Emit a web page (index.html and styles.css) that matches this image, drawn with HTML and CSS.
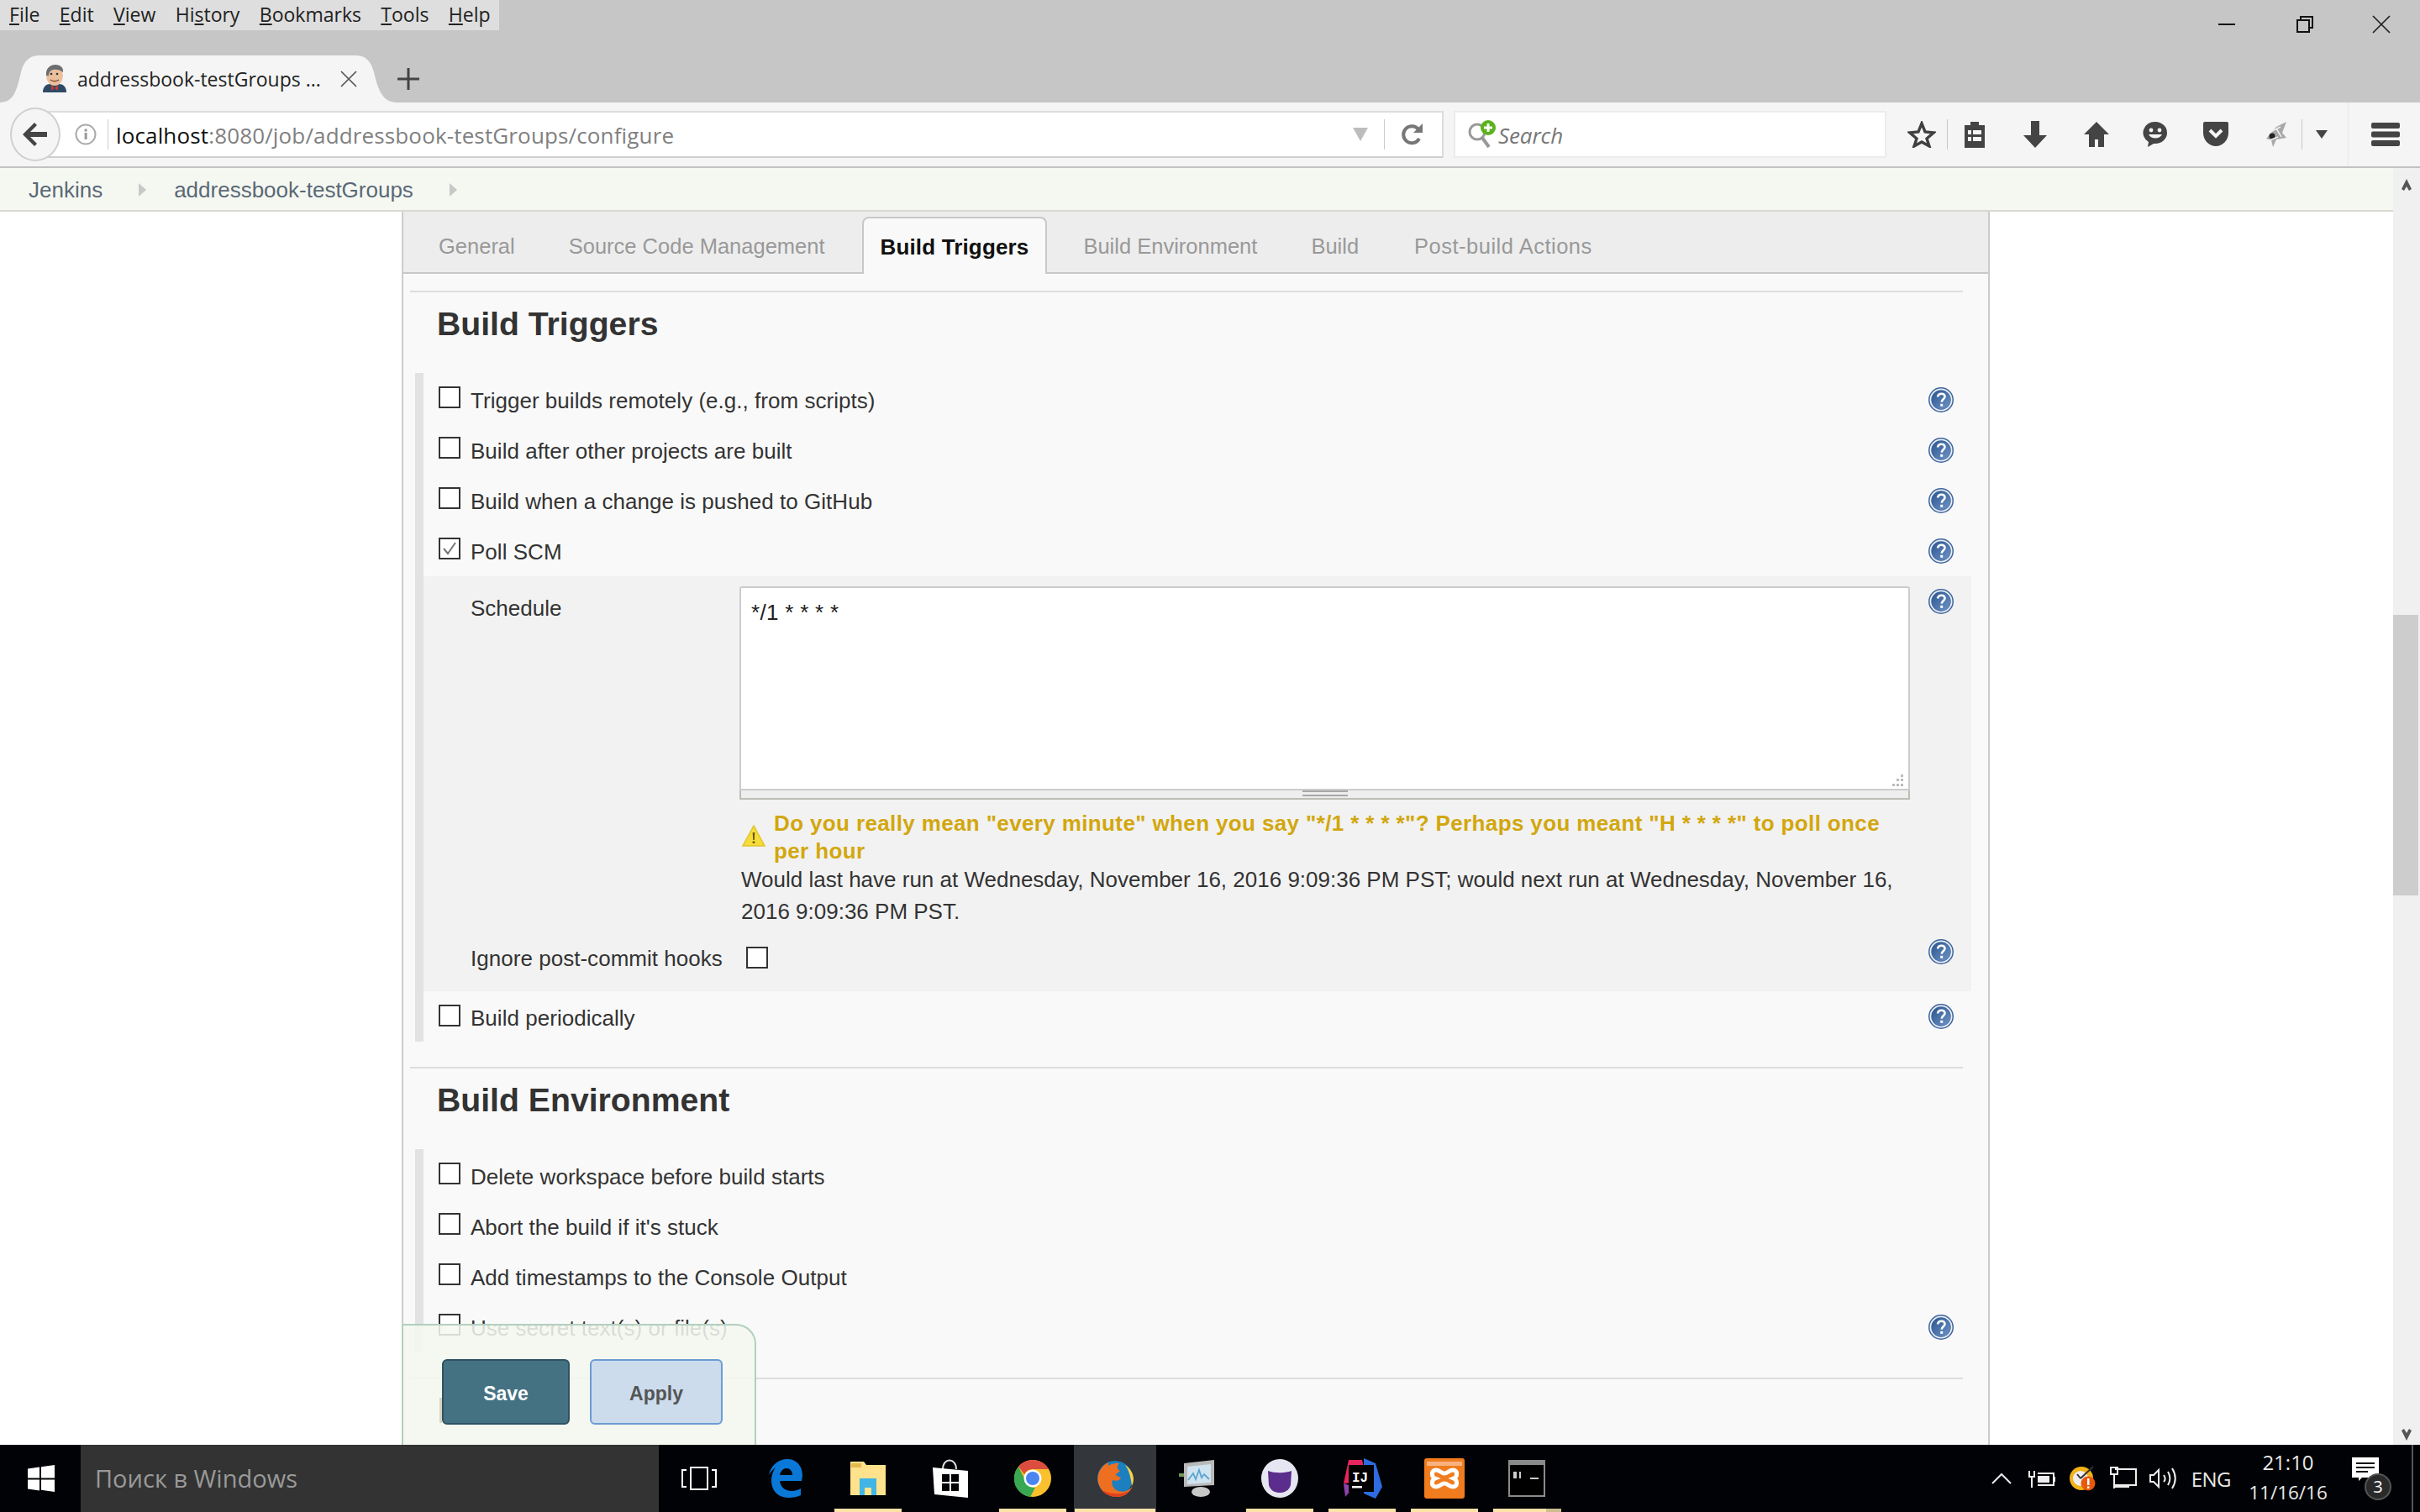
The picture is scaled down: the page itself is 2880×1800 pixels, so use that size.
FILE: index.html
```html
<!DOCTYPE html>
<html lang="en">
<head>
<meta charset="utf-8">
<title>addressbook-testGroups Config</title>
<link rel="stylesheet" href="styles.css">
</head>
<body>
<svg class="sprite" width="0" height="0" aria-hidden="true">
  <defs>
    <linearGradient id="helpfill" x1="0" y1="0" x2="1" y2="1"><stop offset="0" stop-color="#2b558f"/><stop offset="1" stop-color="#6f95c8"/></linearGradient>
    <symbol id="help" viewBox="0 0 32 32">
      <circle cx="16" cy="16" r="15" fill="#3f659c"/>
      <circle cx="16" cy="16" r="12.6" fill="none" stroke="#e8eef6" stroke-width="1.8"/>
      <circle cx="16" cy="16" r="11" fill="url(#helpfill)"/>
      <path d="M12 12.5c.4-2.6 2.2-3.8 4.3-3.8 2.4 0 4.2 1.4 4.2 3.5 0 3-3.6 3.2-3.8 6.4" fill="none" stroke="#fff" stroke-width="2.6"/>
      <rect x="15.2" y="20.8" width="3" height="3" fill="#fff"/>
    </symbol>
  </defs>
</svg>
<div class="screen">
  <header class="chrome-top">
    <nav class="menubar">
      <span class="menu"><u>F</u>ile</span><span class="menu"><u>E</u>dit</span><span class="menu"><u>V</u>iew</span><span class="menu">Hi<u>s</u>tory</span><span class="menu"><u>B</u>ookmarks</span><span class="menu"><u>T</u>ools</span><span class="menu"><u>H</u>elp</span>
    </nav>
    <div class="winctl">
      <svg class="wc-min" width="20" height="4" viewBox="0 0 20 4"><rect width="20" height="2" y="1" fill="#111"/></svg>
      <svg class="wc-res" width="20" height="20" viewBox="0 0 20 20"><path d="M5 4V1h14v13h-4M1 5h14v14H1z" fill="none" stroke="#111" stroke-width="2"/></svg>
      <svg class="wc-close" width="22" height="22" viewBox="0 0 22 22"><path d="M1 1l20 20M21 1L1 21" stroke="#222" stroke-width="1.7"/></svg>
    </div>
    <div class="tabstrip">
      <div class="tab">
        <svg class="tab-shape" width="472" height="56" viewBox="0 0 472 56"><path d="M0 56C16 56 20 42 25 20 29 5 36 0 48 0H422C434 0 441 5 445 20 450 42 456 56 472 56Z" fill="#f5f5f5"/></svg>
        <svg class="favicon" width="30" height="34" viewBox="0 0 30 34">
          <path d="M1 33c0-7 4-10 9-10h10c5 0 9 3 9 10z" fill="#2f4a66"/>
          <path d="M11 24l4 4 4-4v7l-4-3-4 3z" fill="#c23a34"/>
          <ellipse cx="15" cy="13" rx="10" ry="12" fill="#e9bf9c"/>
          <path d="M5 13C4 4 10 0 16 0s10 4 9 9c-3-3-8-4-12-3-3 1-5 3-5 7z" fill="#6b6e70"/>
          <circle cx="11" cy="11" r="1.3" fill="#333"/><circle cx="18" cy="11" r="1.3" fill="#333"/>
          <path d="M10 18c3 2 7 2 10 0" stroke="#7a4a32" stroke-width="1.4" fill="none"/>
        </svg>
        <span class="tab-title">addressbook-testGroups ...</span>
        <svg class="tab-close" width="22" height="22" viewBox="0 0 22 22"><path d="M2 2l18 18M20 2L2 20" stroke="#555" stroke-width="1.7"/></svg>
      </div>
      <svg class="newtab" width="26" height="26" viewBox="0 0 26 26"><path d="M13 0v26M0 13h26" stroke="#444" stroke-width="3"/></svg>
    </div>
  </header>

  <div class="navbar">
    <div class="backbtn"><svg width="32" height="30" viewBox="0 0 32 30"><path d="M15 1L1 15l14 14 3-3-8-8h20v-6H10l8-8z" fill="#444"/></svg></div>
    <div class="urlbar">
      <svg class="info" width="26" height="26" viewBox="0 0 26 26"><circle cx="13" cy="13" r="11.5" fill="none" stroke="#aaa" stroke-width="2"/><rect x="11.6" y="11" width="3" height="8" fill="#999"/><rect x="11.6" y="6.5" width="3" height="3" fill="#999"/></svg>
      <span class="urlsep"></span>
      <span class="url"><span class="url-host">localhost</span>:8080/job/addressbook-testGroups/configure</span>
      <svg class="url-drop" width="18" height="16" viewBox="0 0 18 16"><path d="M0 0h18L9 16z" fill="#bdbdbd"/></svg>
      <span class="urlsep urlsep-r"></span>
      <svg class="reload" width="26" height="30" viewBox="0 0 26 30"><path d="M20 9a10 10 0 1 0 1 11" fill="none" stroke="#777" stroke-width="4"/><path d="M25 2v11H14z" fill="#777"/></svg>
    </div>
    <div class="searchbar">
      <svg class="searchicon" width="36" height="34" viewBox="0 0 36 34"><circle cx="12" cy="14" r="9" fill="none" stroke="#999" stroke-width="3"/><path d="M18 21l8 11" stroke="#999" stroke-width="4"/><circle cx="25" cy="9" r="9" fill="#5ab31a"/><path d="M25 4v10M20 9h10" stroke="#fff" stroke-width="3"/></svg>
      <span class="search-ph">Search</span>
    </div>
    <div class="tools">
      <svg class="t-star" width="34" height="32" viewBox="0 0 34 32"><path d="M17 3l4 10 10 1-8 7 3 9-9-5-9 5 3-9-8-7 10-1z" fill="none" stroke="#404040" stroke-width="3.4"/></svg>
      <span class="toolsep"></span>
      <svg class="t-clip" width="30" height="34" viewBox="0 0 30 34"><path d="M3 6h7V2h10v4h7v27H3z" fill="#444"/><path d="M7 12h16v5H7zM7 20h16v5H7z" fill="#f5f5f5"/><path d="M12 10v17" stroke="#444" stroke-width="2"/></svg>
      <svg class="t-dl" width="30" height="32" viewBox="0 0 30 32"><path d="M10 0h10v17h9L15 32 1 17h9z" fill="#444"/></svg>
      <svg class="t-home" width="32" height="32" viewBox="0 0 32 32"><path d="M16 1L1 16h6v15h7v-9h4v9h7V16h6z" fill="#444"/></svg>
      <svg class="t-hello" width="30" height="32" viewBox="0 0 30 32"><path d="M15 1a14 13 0 0 0-8 24l-1 6 7-4h2a14 13 0 0 0 0-26z" fill="#444"/><circle cx="10" cy="11" r="2.4" fill="#f5f5f5"/><circle cx="20" cy="11" r="2.4" fill="#f5f5f5"/><path d="M7 16c3 6 13 6 16 0z" fill="#f5f5f5"/></svg>
      <svg class="t-pocket" width="32" height="32" viewBox="0 0 32 32"><path d="M3 1h26a2 2 0 0 1 2 2v11a15 16 0 0 1-30 0V3a2 2 0 0 1 2-2z" fill="#444"/><path d="M9 11l7 7 7-7" fill="none" stroke="#f5f5f5" stroke-width="4"/></svg>
      <svg class="t-fly" width="32" height="34" viewBox="0 0 32 34"><path d="M4 22L16 8l12-6-5 13 5 6-12 2-4 9-2-8z" fill="#a8a8a8"/><circle cx="11" cy="19" r="3.5" fill="#222"/><path d="M16 10l6 10M9 14l12-6M8 24l10-4" stroke="#eee" stroke-width="1.5"/></svg>
      <span class="toolsep toolsep-b"></span>
      <svg class="t-more" width="14" height="10" viewBox="0 0 14 10"><path d="M0 0h14L7 10z" fill="#444"/></svg>
      <span class="toolsep toolsep-c"></span>
      <svg class="t-menu" width="34" height="28" viewBox="0 0 34 28"><path d="M2 0h30a2 2 0 0 1 2 2v3a2 2 0 0 1-2 2H2a2 2 0 0 1-2-2V2a2 2 0 0 1 2-2zM2 10.500h30a2 2 0 0 1 2 2v3a2 2 0 0 1-2 2H2a2 2 0 0 1-2-2v-3a2 2 0 0 1 2-2zM2 21h30a2 2 0 0 1 2 2v3a2 2 0 0 1-2 2H2a2 2 0 0 1-2-2v-3a2 2 0 0 1 2-2z" fill="#444"/></svg>
    </div>
  </div>

  <div class="body-row">
    <div class="viewport">
      <div class="crumbs">
        <a class="crumb">Jenkins</a><i class="crumb-arrow"></i>
        <a class="crumb">addressbook-testGroups</a><i class="crumb-arrow"></i>
      </div>
      <div class="doc">
        <form class="cfg">
          <div class="cfg-tabs">
            <span class="cfg-tab">General</span>
            <span class="cfg-tab">Source Code Management</span>
            <span class="cfg-tab is-active">Build Triggers</span>
            <span class="cfg-tab">Build Environment</span>
            <span class="cfg-tab">Build</span>
            <span class="cfg-tab cfg-tab-last">Post-build Actions</span>
          </div>
          <div class="cfg-body">
            <hr class="rule rule-first">
            <h2 class="sect-title">Build Triggers</h2>
            <div class="sect">
              <div class="row"><span class="cb"></span><span class="lbl">Trigger builds remotely (e.g., from scripts)</span><svg class="help"><use href="#help"/></svg></div>
              <div class="row"><span class="cb"></span><span class="lbl">Build after other projects are built</span><svg class="help"><use href="#help"/></svg></div>
              <div class="row"><span class="cb"></span><span class="lbl">Build when a change is pushed to GitHub</span><svg class="help"><use href="#help"/></svg></div>
              <div class="row"><span class="cb"><svg width="22" height="22" viewBox="0 0 22 22"><path d="M4 11l5 6 9-13" fill="none" stroke="#777" stroke-width="2"/></svg></span><span class="lbl">Poll SCM</span><svg class="help"><use href="#help"/></svg></div>
              <div class="nested">
                <div class="sched">
                  <span class="sched-lbl">Schedule</span>
                  <div class="sched-val">
                    <div class="ta">
                      <span class="ta-text">*/1 * * * *</span>
                      <svg class="grip" width="16" height="16" viewBox="0 0 16 16"><path d="M11 1h3v3h-3zM6 6h3v3H6zM11 6h3v3h-3zM1 12h3v3H1zM6 12h3v3H6zM11 12h3v3h-3z" fill="#bbb"/></svg>
                    </div>
                    <div class="ta-handle"><span class="ta-handle-grip"></span></div>
                    <div class="warn">
                      <svg class="warn-ic" width="28" height="26" viewBox="0 0 28 26"><path d="M14 1L1 25h26z" fill="#f5dc3a" stroke="#e0c52a" stroke-width="1.5"/><path d="M12.700 9h2.600l-.5 9h-1.600zM12.700 19.500h2.600v2.500h-2.600z" fill="#6b5a10"/></svg>
                      <span class="warn-text">Do you really mean "every minute" when you say "*/1 * * * *"? Perhaps you meant "H * * * *" to poll once per hour</span>
                    </div>
                    <p class="sched-info">Would last have run at Wednesday, November 16, 2016 9:09:36 PM PST; would next run at Wednesday, November 16, 2016 9:09:36 PM PST.</p>
                  </div>
                  <svg class="help help-sched"><use href="#help"/></svg>
                </div>
                <div class="ignore">
                  <span class="lbl ignore-lbl">Ignore post-commit hooks</span><span class="cb cb-plain"></span><svg class="help help-ign"><use href="#help"/></svg>
                </div>
              </div>
              <div class="row row-down"><span class="cb"></span><span class="lbl">Build periodically</span><svg class="help help-up"><use href="#help"/></svg></div>
            </div>
            <hr class="rule">
            <h2 class="sect-title">Build Environment</h2>
            <div class="sect">
              <div class="row"><span class="cb"></span><span class="lbl">Delete workspace before build starts</span></div>
              <div class="row"><span class="cb"></span><span class="lbl">Abort the build if it's stuck</span></div>
              <div class="row"><span class="cb"></span><span class="lbl">Add timestamps to the Console Output</span></div>
              <div class="row"><span class="cb"></span><span class="lbl">Use secret text(s) or file(s)</span><svg class="help"><use href="#help"/></svg></div>
            </div>
            <hr class="rule">
          </div>
        </form>
        <div class="savebar">
          <button type="button" class="btn btn-save">Save</button>
          <button type="button" class="btn btn-apply">Apply</button>
        </div>
      </div>
    </div>
    <div class="scrollbar">
      <svg class="sb-arrow" width="14" height="16" viewBox="0 0 14 16"><path d="M7 1L1 13l3 2 3-5 3 5 3-2z" fill="#555"/></svg>
      <span class="sb-thumb"></span>
      <svg class="sb-arrow sb-down" width="14" height="16" viewBox="0 0 14 16"><path d="M7 15l6-12-3-2-3 5-3-5-3 2z" fill="#555"/></svg>
    </div>
  </div>

  <footer class="taskbar">
    <div class="start"><svg width="32" height="32" viewBox="0 0 32 32"><path d="M0 4.500L14 2.500v13H0zM16 2.200L32 0v15.500H16zM0 17.500h14v13l-14-2zM16 17.500h16V32l-16-2.200z" fill="#fff"/></svg></div>
    <div class="tb-search">Поиск в Windows</div>
    <div class="slot slot-tv"><svg width="42" height="28" viewBox="0 0 42 28"><path d="M11 1h20v26H11zM6 4H1v20h5M36 4h5v20h-5" fill="none" stroke="#fff" stroke-width="2"/></svg></div>
    <div class="slot"><svg width="40" height="46" viewBox="0 0 40 46"><path d="M39 26H13c1 8 7 12 14 12 4 0 8-1 11-3v8c-4 2-9 3-14 3C11 46 3 38 3 25 3 20 5 14 8 10c-3 2-6 5-8 9C2 8 11 0 22 0c11 0 18 8 18 20z" fill="#0a78d7"/><path d="M13 19h15c0-5-3-8-7-8s-7 3-8 8z" fill="#010205"/></svg></div>
    <div class="slot running"><svg width="44" height="44" viewBox="0 0 44 44"><path d="M1 2h16l3 4h23v36H1z" fill="#ffe28c"/><path d="M2 4h12v5H2z" fill="#e5b94c"/><path d="M12 42V22h20v20h-6v-9h-8v9z" fill="#40b5e6"/></svg></div>
    <div class="slot"><svg width="42" height="46" viewBox="0 0 42 46"><path d="M12 12c0-14 16-14 16 0" fill="none" stroke="#ddd" stroke-width="2"/><path d="M0 10l42 4v32L2 42z" fill="#fff"/><path d="M11 18h9v9h-9zM22 18h9v9h-9zM11 29h9v9h-9zM22 29h9v9h-9z" fill="#010205"/></svg></div>
    <div class="slot running"><svg width="44" height="44" viewBox="0 0 44 44"><circle cx="22" cy="22" r="22" fill="#fbc02d"/><path d="M22 0a22 22 0 0 1 19 11H22a11 11 0 0 0-10 6L5 8A22 22 0 0 1 22 0z" fill="#dd4d3f"/><path d="M5 8l9 18a11 11 0 0 0 11 7l-6 11A22 22 0 0 1 5 8z" fill="#38a852"/><circle cx="22" cy="22" r="10.500" fill="#fff"/><circle cx="22" cy="22" r="8" fill="#4a85f0"/></svg></div>
    <div class="slot running is-active"><svg width="44" height="44" viewBox="0 0 44 44"><circle cx="22" cy="22" r="21" fill="#1c7fc0"/><path d="M34 6c6 4 10 10 10 17 0 3-1 6-2 8-1-9-3-18-8-25z" fill="#f7d046"/><path d="M14 3C4 8 0 18 2 27c3 11 12 17 22 17 9 0 16-5 19-13-4 6-11 8-17 6-6-2-9-8-7-13 5 2 9 0 10-3-3-1-6-2-6-4l5-4c-3-1-5-5-1-9-5 0-8 0-13 3z" fill="#ee6f1f"/><path d="M6 36c5 6 12 8 18 8 6 0 12-3 16-8-5 3-12 5-18 4-6 0-11-2-16-4z" fill="#e0401e"/></svg></div>
    <div class="slot"><svg width="44" height="44" viewBox="0 0 44 44"><path d="M6 4l36-4v30l-36 2z" fill="#b9b9b9"/><path d="M10 8l28-3v22l-28 2z" fill="#cfe4f0"/><path d="M11 24l6-8 3 7 4-11 3 9 3-4 6 6" fill="none" stroke="#5ba4cf" stroke-width="1.800"/><ellipse cx="26" cy="38" rx="11" ry="6" fill="#c8c8c8"/><rect x="0" y="16" width="6" height="4" fill="#6e9a5c"/></svg></div>
    <div class="slot running"><svg width="44" height="46" viewBox="0 0 44 46"><ellipse cx="22" cy="23" rx="22" ry="23" fill="#e6e6f2"/><path d="M8 14c8 3 20 3 28 0l-1 17c-2 7-8 9-13 9s-11-2-13-9z" fill="#5b2d8c"/></svg></div>
    <div class="slot running"><svg width="48" height="48" viewBox="0 0 48 48"><path d="M2 30L8 2h16l6 26z" fill="#e8265e"/><path d="M26 0l14 6 8 28-8 14-14-6z" fill="#2d6be0"/><path d="M2 30l12 4-10 12z" fill="#8e44ad"/><rect x="8" y="8" width="30" height="32" fill="#000"/><text x="12" y="28" class="ij-text">IJ</text><rect x="12" y="33" width="12" height="2.500" fill="#fff"/></svg></div>
    <div class="slot running"><svg width="48" height="48" viewBox="0 0 48 48"><rect width="48" height="48" rx="3" fill="#f07c1e"/><rect x="3" y="4" width="42" height="5" fill="#f8b27e"/><path d="M14 14c-6 0-6 8-1 10-5 2-5 10 1 10 5 0 6-4 10-4s5 4 10 4c6 0 6-8 1-10 5-2 5-10-1-10-5 0-6 4-10 4s-5-4-10-4z" fill="none" stroke="#fff" stroke-width="5"/></svg></div>
    <div class="slot running running-last"><svg width="44" height="44" viewBox="0 0 44 44"><rect width="44" height="44" fill="#8a8a8a"/><rect x="2" y="6" width="40" height="36" fill="#000"/><path d="M6 14h4v8H6zM13 14h2v8h-2zM18 14l3 8M26 21h10v2H26z" fill="#ccc"/></svg></div>
    <div class="tray">
      <svg class="tr-caret" width="24" height="14" viewBox="0 0 24 14"><path d="M1 13L12 2l11 11" fill="none" stroke="#e8e8e8" stroke-width="2"/></svg>
      <svg class="tr-batt" width="32" height="24" viewBox="0 0 32 24"><path d="M1 3v7h6V3M4 10v13M11 6h19v14H11" fill="none" stroke="#eee" stroke-width="2"/><rect x="11" y="9" width="14" height="8" fill="#eee"/><rect x="30" y="10" width="2" height="6" fill="#eee"/></svg>
      <svg class="tr-clock" width="32" height="30" viewBox="0 0 32 30"><circle cx="15" cy="15" r="14" fill="#f2b318"/><circle cx="14" cy="15" r="9" fill="#eee"/><path d="M14 15l-4-5M14 15L29 1" stroke="#333" stroke-width="2"/><circle cx="23" cy="21" r="8.500" fill="#e8590c"/><path d="M22 15h2.500v8H22zM22 24.500h2.500V27H22z" fill="#fff"/></svg>
      <svg class="tr-net" width="32" height="28" viewBox="0 0 32 28"><path d="M6 3h25v19H6M1 1h8v8H1zM5 9v17M5 24h18M14 22v3" fill="none" stroke="#eee" stroke-width="2"/></svg>
      <svg class="tr-vol" width="32" height="28" viewBox="0 0 32 28"><path d="M1 10h4l6-6v20l-6-6H1zM17 10c2 3 2 6 0 8M22 6c3 5 3 11 0 16M27 2c5 8 5 16 0 24" fill="none" stroke="#eee" stroke-width="2"/></svg>
      <span class="tr-lang">ENG</span>
      <div class="tr-time"><span>21:10</span><span class="tr-date">11/16/16</span></div>
      <div class="tr-notif">
        <svg width="32" height="28" viewBox="0 0 32 28"><path d="M0 0h32v24H12l-4 4v-4H0z" fill="#fff"/><path d="M5 7h22M5 12h22M5 17h14" stroke="#111" stroke-width="2"/></svg>
        <span class="tr-badge">3</span>
      </div>
      <span class="tr-desk"></span>
    </div>
  </footer>
</div>
</body>
</html>
```
FILE: styles.css
```css
* { box-sizing: border-box; }
html, body { margin: 0; padding: 0; }
body { font-family: "Liberation Sans", Arial, sans-serif; color: #333; background: #fff; overflow: hidden; }
.sprite { position: absolute; }
.screen { width: 2880px; height: 1800px; display: flex; flex-direction: column; overflow: hidden; position: relative; }

/* Browser top */
.chrome-top { height: 122px; background: #c6c6c6; position: relative; flex: none; font-family: "Open Sans", sans-serif; }
.menubar { width: 594px; height: 36px; background: #dedede; display: flex; align-items: center; padding: 0 0 2px 11px; gap: 23.4px; font-size: 23px; color: #222; }
.menu u { text-underline-offset: 2px; }
.winctl { position: absolute; top: 18px; right: 35px; display: flex; align-items: center; }
.wc-min { margin-right: 73px; }
.wc-res { margin-right: 70px; }
.tabstrip { display: flex; margin-top: 30px; height: 56px; align-items: center; }
.tab { position: relative; width: 472px; height: 56px; display: flex; align-items: center; }
.tab-shape { position: absolute; left: 0; top: 0; }
.favicon { position: relative; margin-left: 50px; }
.tab-title { position: relative; margin-left: 12px; font-size: 23px; color: #222; white-space: nowrap; width: 283px; }
.tab-close { position: relative; margin-left: 29px; }
.newtab { margin-left: 1px; }

/* Nav bar */
.navbar { height: 78px; background: #f5f5f5; border-bottom: 2px solid #c2c2c2; display: flex; align-items: center; padding-left: 12px; flex: none; }
.backbtn { width: 60px; height: 64px; border-radius: 50%; background: #f5f5f5; border: 2px solid #d0d0d0; display: flex; align-items: center; justify-content: center; position: relative; z-index: 1; flex: none; }
.urlbar { width: 1670px; height: 56px; margin-left: -24px; background: #fff; border: 2px solid #dcdcdc; border-bottom-color: #cfcfcf; display: flex; align-items: center; padding-left: 39px; flex: none; }
.info { flex: none; }
.urlsep { width: 1px; height: 36px; background: #ccc; margin-left: 13px; flex: none; }
.url { margin-left: 9px; padding-top: 2px; font-family: "Open Sans", sans-serif; font-size: 26px; color: #808080; white-space: nowrap; letter-spacing: 0.14px; }
.url-host { color: #111; }
.url-drop { margin-left: auto; }
.urlsep-r { margin-left: 19px; }
.reload { margin-left: 20px; margin-right: 22px; }
.searchbar { width: 515px; height: 56px; margin-left: 12px; background: #fff; border: 2px solid #ececec; display: flex; align-items: center; padding-left: 14px; flex: none; }
.searchicon { flex: none; }
.search-ph { font-family: "Open Sans", sans-serif; font-style: italic; font-size: 26px; color: #777; margin-left: 1px; padding-top: 2px; letter-spacing: -0.1px; }
.tools { display: flex; align-items: center; height: 76px; margin-left: 25px; flex: 1; }
.t-star { margin-right: 13px; }
.toolsep { width: 1px; height: 36px; background: #c8c8c8; flex: none; }
.t-clip { margin-left: 17px; }
.t-dl { margin-left: 42px; }
.t-home { margin-left: 42px; }
.t-hello { margin-left: 39px; }
.t-pocket { margin-left: 41px; }
.t-fly { margin-left: 40px; }
.toolsep-b { margin-left: 14px; }
.t-more { margin-left: 16px; }
.toolsep-c { margin-left: 24px; height: 76px; background: #e6e6e6; }
.t-menu { margin-left: 27px; }

/* Body */
.body-row { flex: 1; display: flex; min-height: 0; }
.viewport { flex: 1; display: flex; flex-direction: column; min-width: 0; }
.crumbs { height: 52px; flex: none; background: #f5f8f1; border-bottom: 2px solid #d8d8d2; display: flex; align-items: center; padding: 2px 0 0 34px; font-size: 26px; color: #5a6876; }
.crumb-arrow { width: 0; height: 0; border-left: 9px solid #c8c8c8; border-top: 8px solid transparent; border-bottom: 8px solid transparent; margin: 0 33px 0 43px; }
.doc { flex: 1; position: relative; overflow: hidden; background: #fff; padding-left: 478px; }
.cfg { width: 1890px; height: 100%; border-left: 2px solid #ccc; border-right: 2px solid #ccc; background: #f9f9f9; }
.cfg-tabs { height: 74px; background: #ededed; border-bottom: 2px solid #c8c8c8; display: flex; align-items: flex-end; padding-left: 42px; font-size: 25.5px; color: #999; }
.cfg-tab { height: 40px; margin-right: 64px; line-height: 30px; padding-bottom: 10px; margin-bottom: 6px; white-space: nowrap; }
.cfg-tab.is-active { height: 68px; margin: 0 43px -2px -20px; padding: 16px 20px 0 20px; background: #f9f9f9; border: 2px solid #c8c8c8; border-bottom: 0; border-radius: 8px 8px 0 0; color: #111; font-size: 26px; font-weight: 700; line-height: 36px; letter-spacing: 0.15px; }
.cfg-tab-last { letter-spacing: 0.5px; margin-left: 2px; }
.cfg-body { padding: 20px 30px 0 8px; }
.rule { height: 2px; border: 0; margin: 0; background: #ddd; }
.sect-title { margin: 0; padding: 14px 0 0 32px; height: 96px; font-size: 39.2px; line-height: 48px; font-weight: 700; color: #333; }
.sect { margin: 0 -10px 30px 6px; border-left: 10px solid #e2e2e2; padding-top: 2px; }
.row { height: 60px; display: flex; align-items: center; padding: 0 20px 0 18px; }
.row-down { padding-top: 2px; }
.help-up { margin-top: -2px; }
.cb { width: 26px; height: 26px; border: 2px solid #333; background: #fff; flex: none; align-self: flex-start; margin-top: 14px; margin-right: 12px; display: block; }
.cb svg { display: block; }
.lbl { font-size: 26px; color: #333; white-space: nowrap; letter-spacing: 0.03px; margin-top: 2px; }
.help { width: 32px; height: 32px; margin-left: auto; flex: none; display: block; }
.nested { background: #f2f2f2; height: 494px; padding: 12px 20px 0 56px; }
.sched { display: flex; align-items: flex-start; }
.sched-lbl { width: 320px; font-size: 26px; line-height: 52px; flex: none; }
.sched-val { width: 1393px; flex: none; }
.help-sched { margin-top: 2px; }
.ta { height: 243px; background: #fff; border: 2px solid #ccc; border-radius: 3px 3px 0 0; position: relative; padding: 14px 12px; font-size: 26px; line-height: 30px; color: #222; }
.ta-text { display: block; letter-spacing: 0.3px; }
.grip { position: absolute; right: 4px; bottom: 2px; }
.ta-handle { height: 11px; background: #eee; border: 2px solid #bdbdb6; border-top: 0; display: flex; justify-content: center; align-items: flex-start; }
.ta-handle-grip { width: 54px; height: 7px; border-top: 2px solid #a8a8a8; border-bottom: 2px solid #a8a8a8; }
.warn { display: flex; align-items: flex-start; margin-top: 12px; padding-left: 3px; }
.warn-ic { flex: none; margin-top: 18px; margin-right: 10px; }
.warn-text { font-size: 26px; line-height: 33px; font-weight: 700; color: #d2a70e; letter-spacing: 0.37px; }
.sched-info { margin: -2px 0 0; padding-left: 2px; font-size: 26px; line-height: 38px; color: #333; }
.ignore { height: 72px; display: flex; align-items: center; }
.ignore-lbl { width: 328px; }
.cb-plain { align-self: center; margin: 0; }
.help-ign { margin-bottom: 14px; }

/* Save bar */
.savebar { position: absolute; left: 478px; bottom: 0; width: 422px; height: 144px; background: rgba(245, 248, 240, 0.86); border: 2px solid #b2d0bd; border-bottom: 0; border-radius: 0 24px 0 0; display: flex; gap: 24px; padding: 40px 0 0 46px; }
.savebar::before { content: ""; position: absolute; left: 43px; top: 86px; width: 3px; height: 30px; background: #d8d4c4; }
.btn { height: 78px; font: 700 23px "Liberation Sans", Arial, sans-serif; border-radius: 6px; border-style: solid; border-width: 2px; padding: 4px 0 0; }
.btn-save { width: 152px; background: #457283; border-color: #2e5262; color: #fff; }
.btn-apply { width: 158px; background: #ccdcec; border-color: #6b9bd2; color: #555; }

/* Scrollbar */
.scrollbar { width: 32px; flex: none; background: #f0f0f0; position: relative; display: flex; flex-direction: column; align-items: center; padding-top: 12px; }
.sb-thumb { position: absolute; left: 0; top: 532px; width: 30px; height: 334px; background: #cdcdcd; }
.sb-down { margin-top: auto; margin-bottom: 4px; }

/* Taskbar */
.taskbar { height: 80px; flex: none; background: #010205; display: flex; align-items: center; }
.start { width: 96px; display: flex; justify-content: center; flex: none; }
.start svg { display: block; margin-left: 1px; }
.tb-search { width: 688px; height: 80px; flex: none; background: #333; color: #999; font-family: "Open Sans", sans-serif; font-size: 29px; line-height: 80px; padding-left: 17px; }
.slot { width: 98px; height: 80px; flex: none; display: flex; align-items: center; justify-content: center; position: relative; }
.slot-tv { width: 102px; }
.slot-tv svg { margin-right: 6px; }
.running::after { content: ""; position: absolute; left: 9px; right: 9px; bottom: 0; height: 4px; background: #fde3a8; }
.is-active { background: #33363a; }
.is-active::after { left: 1px; right: 1px; }
.running-last::after { right: 8px; background: linear-gradient(90deg, #fde3a8 78%, #cdbc8e 78%); }
.ij-text { font: 700 16px "Liberation Mono", monospace; fill: #fff; }
.tray { margin-left: auto; display: flex; align-items: center; height: 80px; position: relative; padding-right: 9px; color: #e8e8e8; font-family: "Open Sans", sans-serif; }
.tr-caret { margin-right: 20px; }
.tr-batt { margin-right: 16px; }
.tr-clock { margin-right: 17px; }
.tr-net { margin-right: 15px; }
.tr-vol { margin-right: 18px; }
.tr-lang { font-size: 24px; margin-right: 22px; letter-spacing: -0.5px; }
.tr-time { display: flex; flex-direction: column; align-items: center; font-size: 24px; line-height: 36px; width: 92px; margin-top: -2px; }
.tr-date { font-size: 22.5px; }
.tr-notif { position: relative; width: 48px; height: 50px; margin-left: 30px; margin-right: 24px; margin-top: 0; }
.tr-notif svg { display: block; }
.tr-badge { position: absolute; left: 15px; top: 19px; width: 32px; height: 32px; border-radius: 50%; background: #2a2a2a; border: 2px solid #555; color: #fff; font-size: 20px; line-height: 27px; text-align: center; }
.tr-desk { width: 2px; height: 80px; background: #555; position: absolute; right: 8px; top: 0; }
```
